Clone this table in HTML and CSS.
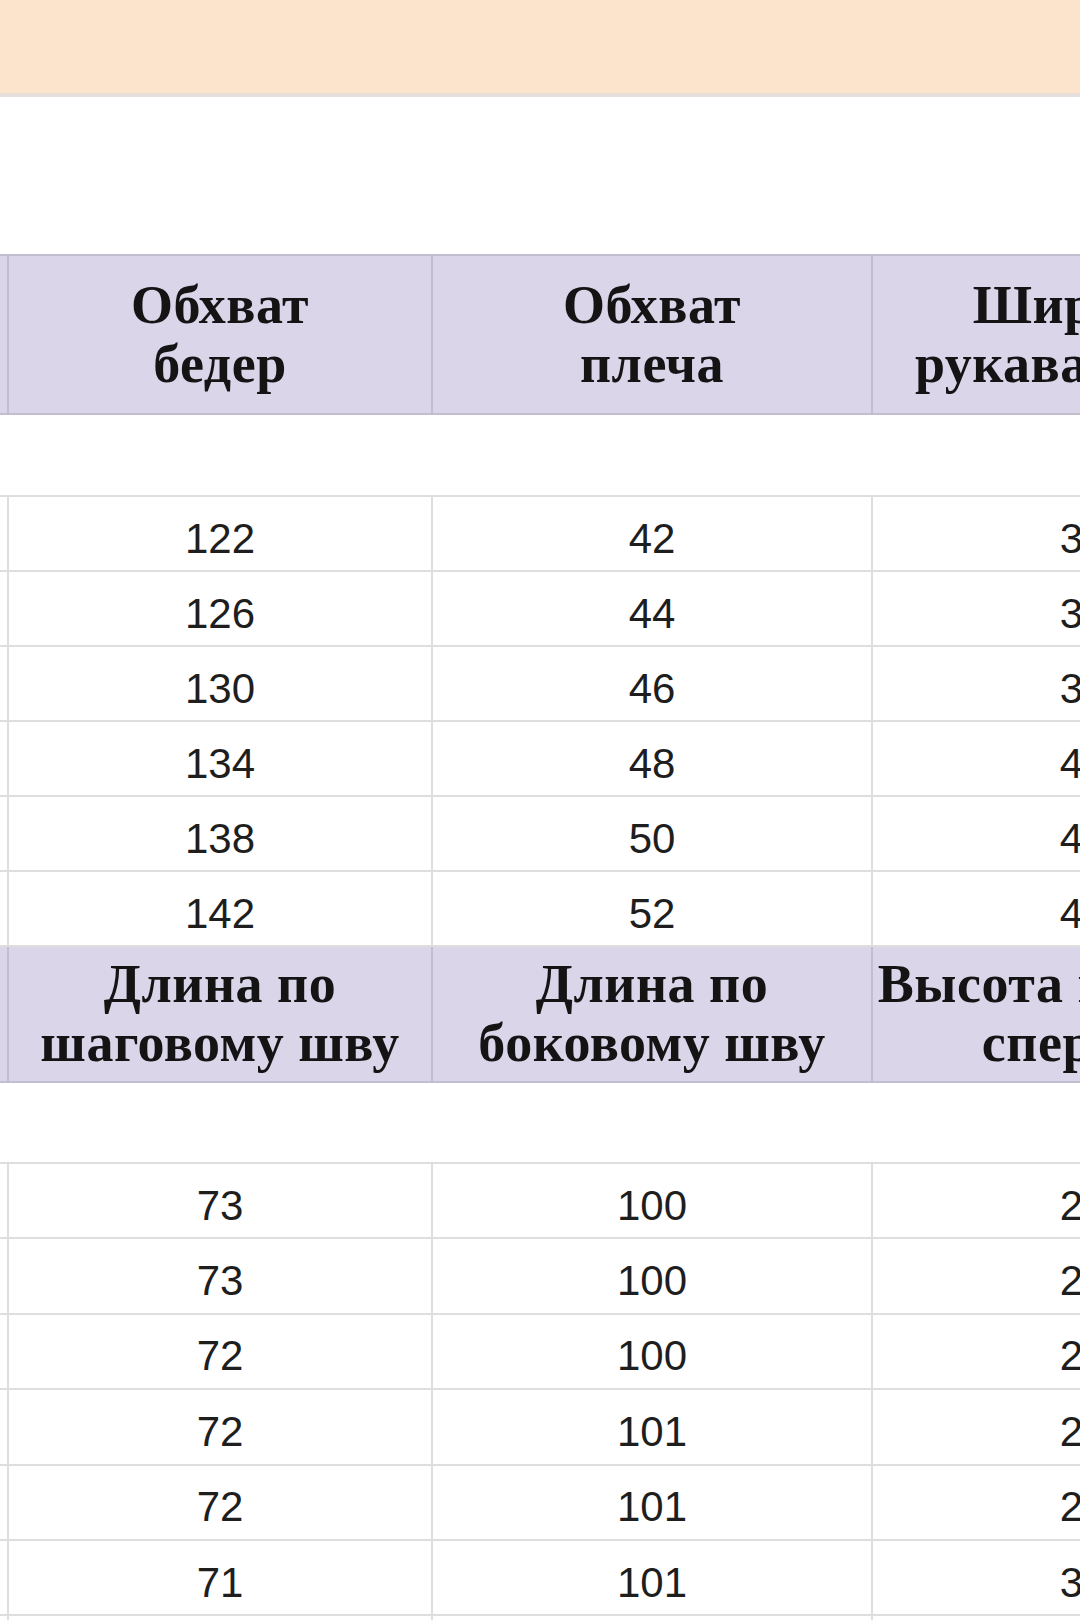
FILE: index.html
```html
<!DOCTYPE html>
<html lang="ru">
<head>
<meta charset="utf-8">
<title>Таблица размеров</title>
<link rel="stylesheet" href="styles.css">
</head>
<body>
<div class="banner"></div>
<div class="sheet">
  <table class="grid">
    <colgroup>
      <col class="c0"><col class="c1"><col class="c2"><col class="c3">
    </colgroup>
    <tbody>
      <tr class="head head-tall">
        <th></th>
        <th>Обхват<br>бедер</th>
        <th>Обхват<br>плеча</th>
        <th>Ширина<br>рукава внизу</th>
      </tr>
      <tr class="gap"><td colspan="4"></td></tr>
      <tr class="row"><td></td><td>122</td><td>42</td><td class="last">37</td></tr>
      <tr class="row"><td></td><td>126</td><td>44</td><td class="last">38</td></tr>
      <tr class="row"><td></td><td>130</td><td>46</td><td class="last">39</td></tr>
      <tr class="row"><td></td><td>134</td><td>48</td><td class="last">40</td></tr>
      <tr class="row"><td></td><td>138</td><td>50</td><td class="last">41</td></tr>
      <tr class="row"><td></td><td>142</td><td>52</td><td class="last">42</td></tr>
      <tr class="head head-short">
        <th></th>
        <th>Длина по<br>шаговому шву</th>
        <th>Длина по<br>боковому шву</th>
        <th>Высота посадки<br>спереди</th>
      </tr>
      <tr class="gap gap2"><td colspan="4"></td></tr>
      <tr class="row row2"><td></td><td>73</td><td>100</td><td class="last">27</td></tr>
      <tr class="row row2"><td></td><td>73</td><td>100</td><td class="last">28</td></tr>
      <tr class="row row2"><td></td><td>72</td><td>100</td><td class="last">28</td></tr>
      <tr class="row row2"><td></td><td>72</td><td>101</td><td class="last">29</td></tr>
      <tr class="row row2"><td></td><td>72</td><td>101</td><td class="last">29</td></tr>
      <tr class="row row2"><td></td><td>71</td><td>101</td><td class="last">30</td></tr>
      <tr class="row row2"><td></td><td>71</td><td>101</td><td class="last">30</td></tr>
    </tbody>
  </table>
</div>
</body>
</html>
```

FILE: styles.css
```css
html, body {
  margin: 0;
  padding: 0;
  background: #ffffff;
}

body {
  width: 1080px;
  height: 1620px;
  overflow: hidden;
  font-family: "Liberation Sans", Arial, sans-serif;
}

.banner {
  height: 93px;
  background: #fbe3cc;
  border-bottom: 4px solid #e6dfdb;
}

.sheet {
  margin-top: 157px;
  width: 1080px;
  overflow: hidden;
}

.grid {
  border-collapse: collapse;
  table-layout: fixed;
  width: 1378px;
  margin-left: -93px;
}

.c0 { width: 100px; }
.c1 { width: 424px; }
.c2 { width: 440px; }
.c3 { width: 414px; }

.head th {
  background: #dbd5ea;
  border: 2px solid #c2bdcf;
  font-family: "Liberation Serif", "Times New Roman", serif;
  font-weight: bold;
  font-size: 54px;
  line-height: 59px;
  letter-spacing: 0.5px;
  color: #141414;
  text-align: center;
  vertical-align: middle;
  white-space: nowrap;
  padding: 0;
}

.head-tall th { height: 157px; }
.head-short th { height: 134px; }

.gap td {
  height: 80px;
  padding: 0;
  border-top: 2px solid #c2bdcf;
  border-bottom: 2px solid #dedede;
  border-left-style: none;
  border-right-style: none;
}

.gap2 td { height: 79px; }

.row td {
  height: 75px;
  box-sizing: border-box;
  padding: 10px 0 0;
  border: 2px solid #dedede;
  font-size: 42px;
  color: #1e1e1e;
  text-align: center;
  vertical-align: middle;
}

.row2 td { height: 75.4px; }

.row td.last {
  padding-left: 8px;
}
```
